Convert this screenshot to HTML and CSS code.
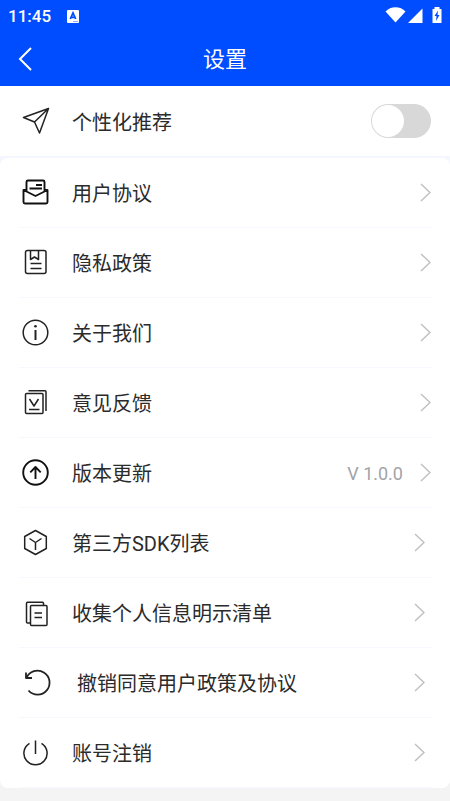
FILE: index.html
```html
<!DOCTYPE html>
<html lang="zh-CN">
<head>
<meta charset="utf-8">
<meta name="viewport" content="width=device-width, initial-scale=1">
<title>设置</title>
<link rel="stylesheet" href="styles.css">
</head>
<body>
<header class="header">
  <div class="status">
    <span class="clock">11:45</span>
    <svg class="status-app" viewBox="0 0 12 13" aria-hidden="true"><rect width="12" height="13" rx="1" fill="#fff"/><path d="M3.300 9 6 3l2.700 6M4 7.300h4" fill="none" stroke="#004dff" stroke-width="1.800"/><path d="M6 11.500h5" stroke="#8fb0ff"/></svg>
    <svg class="status-icons" viewBox="-1.500 0 58 18" aria-hidden="true">
      <path d="M0 4.500C5-1.200 15-1.200 20 4.500L10 15.500Z" fill="#fff"/>
      <path d="M37 1.500V16H22.500Z" fill="#fff"/>
      <path d="M47 2h2V0h5v2h2v14h-9Z" fill="#fff"/>
      <path d="M52.500 3.500 49 9h2l-.5 5L54 8h-2Z" fill="#004dff"/>
    </svg>
  </div>
  <nav class="nav">
    <button class="back" type="button" aria-label="返回"><svg viewBox="0 0 14 24"><path d="M13 1 2 12l11 11"/></svg></button>
    <h1 class="title">设置</h1>
  </nav>
</header>
<main>
  <section class="panel">
    <div class="row">
      <svg class="icon" viewBox="0 0 33 33" aria-hidden="true"><path d="M28.500 3.500 3.500 12.500l11 4.500 5 11ZM14.500 17l14-13.500"/></svg>
      <label class="label" for="recommend">个性化推荐</label>
      <input class="switch" id="recommend" type="checkbox" role="switch">
    </div>
  </section>
  <section class="card">
    <a class="row" href="#agreement">
      <svg class="icon bold" viewBox="0 0 33 33" aria-hidden="true"><path d="M6.500 15V6q0-1.500 1.500-1.500h15q1.500 0 1.500 1.500v9M6.500 12.500l-3 1.500v12q0 1.500 1.500 1.500h21q1.500 0 1.500-1.500V14l-3-1.500M3.500 14l12 6 12-6M16 9h6M9.500 12.500H22"/></svg>
      <span class="label">用户协议</span>
      <svg class="chevron" viewBox="0 0 11 19" aria-hidden="true"><path d="m1 1 9 8.500-9 8.500"/></svg>
    </a>
    <a class="row" href="#privacy">
      <svg class="icon" viewBox="0 0 33 33" aria-hidden="true"><rect x="5.500" y="4.500" width="20.500" height="23" rx="2"/><path d="M10.500 4.500v9l4-2.500 4 2.500v-9M10.500 17.500h11M10.500 22.500h11"/></svg>
      <span class="label">隐私政策</span>
      <svg class="chevron" viewBox="0 0 11 19" aria-hidden="true"><path d="m1 1 9 8.500-9 8.500"/></svg>
    </a>
    <a class="row" href="#about">
      <svg class="icon" viewBox="0 0 33 33" aria-hidden="true"><circle cx="15.500" cy="16.500" r="12.300"/><path d="M15.500 14v10" stroke-width="2"/><circle cx="15.500" cy="10.300" r="1.300" fill="#222" stroke="none"/></svg>
      <span class="label">关于我们</span>
      <svg class="chevron" viewBox="0 0 11 19" aria-hidden="true"><path d="m1 1 9 8.500-9 8.500"/></svg>
    </a>
    <a class="row" href="#feedback">
      <svg class="icon" viewBox="0 0 33 33" aria-hidden="true"><rect x="5.500" y="7.500" width="17.500" height="20" rx="1"/><path d="M8.500 4.700H25q1 0 1 1V25M9.500 13l4.500 7 4.500-7M9 23.500h10.500"/></svg>
      <span class="label">意见反馈</span>
      <svg class="chevron" viewBox="0 0 11 19" aria-hidden="true"><path d="m1 1 9 8.500-9 8.500"/></svg>
    </a>
    <a class="row" href="#update">
      <svg class="icon bold" viewBox="0 0 33 33" aria-hidden="true"><circle cx="15.500" cy="16.500" r="12.300"/><path d="M15.500 23V11M10.300 16.300l5.200-5.300 5.200 5.300"/></svg>
      <span class="label">版本更新</span>
      <span class="version">V 1.0.0</span>
      <svg class="chevron" viewBox="0 0 11 19" aria-hidden="true"><path d="m1 1 9 8.500-9 8.500"/></svg>
    </a>
    <a class="row inset" href="#sdk">
      <svg class="icon" viewBox="0 0 33 33" aria-hidden="true"><path d="M15.500 4.500 26.300 10.500v12L15.500 28.500l-10.800-6v-12ZM9.500 12.500l6 4 6-4M15.500 16.500V24"/></svg>
      <span class="label">第三方SDK列表</span>
      <svg class="chevron" viewBox="0 0 11 19" aria-hidden="true"><path d="m1 1 9 8.500-9 8.500"/></svg>
    </a>
    <a class="row inset" href="#collection">
      <svg class="icon" viewBox="0 0 33 33" aria-hidden="true"><path d="M23.500 9.500V7.300q0-1-1-1h-15q-1 0-1 1V26q0 1 1 1h3"/><rect x="10.500" y="9.500" width="16.500" height="20" rx="1"/><path d="M14.500 17H22M14.500 21.500H22"/></svg>
      <span class="label">收集个人信息明示清单</span>
      <svg class="chevron" viewBox="0 0 11 19" aria-hidden="true"><path d="m1 1 9 8.500-9 8.500"/></svg>
    </a>
    <a class="row inset" href="#revoke">
      <svg class="icon" viewBox="0 0 33 33" aria-hidden="true"><path d="M8.500 24.500A12 12 0 1 0 6.500 12M6 6.500V12h6" stroke-width="1.800"/></svg>
      <span class="label">&nbsp;撤销同意用户政策及协议</span>
      <svg class="chevron" viewBox="0 0 11 19" aria-hidden="true"><path d="m1 1 9 8.500-9 8.500"/></svg>
    </a>
    <a class="row inset" href="#close-account">
      <svg class="icon" viewBox="0 0 33 33" aria-hidden="true"><path d="M9.500 7.300a11.600 11.600 0 1 0 12 0M15.500 4.500V18"/></svg>
      <span class="label">账号注销</span>
      <svg class="chevron" viewBox="0 0 11 19" aria-hidden="true"><path d="m1 1 9 8.500-9 8.500"/></svg>
    </a>
  </section>
</main>
</body>
</html>
```
FILE: styles.css
```css
* {
  box-sizing: border-box;
}

body {
  margin: 0;
  background: #f4f4f4;
  color: #2b2b2b;
  font-family: Roboto, "Noto Sans CJK SC", sans-serif;
  font-size: 20px;
}

svg {
  display: block;
  flex: none;
}

.header {
  background: #004dff;
  color: #fff;
}

.status {
  display: flex;
  align-items: center;
  height: 32px;
  padding: 0 8px;
}

.clock {
  font-size: 17px;
  font-weight: 500;
  line-height: 32px;
}

.status-app {
  width: 12px;
  height: 13px;
  margin-left: 16px;
}

.status-icons {
  width: 58px;
  height: 18px;
  margin-left: auto;
}

.nav {
  display: grid;
  grid-template-columns: 52px 1fr 52px;
  align-items: center;
  height: 54px;
}

.back {
  display: flex;
  padding: 8px 18px;
  border: 0;
  background: none;
}

.back svg {
  width: 14px;
  height: 24px;
  fill: none;
  stroke: #fff;
  stroke-width: 2;
}

.title {
  margin: 0;
  padding-top: 2px;
  font-size: 22px;
  font-weight: 400;
  line-height: 32px;
  text-align: center;
}

.panel,
.card {
  padding: 0 19px;
  background: #fff;
}

.panel {
  margin-bottom: 2px;
}

main {
  background: linear-gradient(#f5f7ff 100px, #f4f4f4 100px);
}

.card {
  border-radius: 8px;
}

.row {
  display: flex;
  align-items: center;
  height: 70px;
  border-bottom: 1px solid #f7f8fe;
  color: inherit;
  text-decoration: none;
}

.panel .row {
  border-bottom: 0;
}

.icon {
  width: 33px;
  height: 33px;
  margin: 0 19px 0 1px;
  fill: none;
  stroke: #222;
  stroke-width: 1.5;
  stroke-linejoin: round;
}

.bold {
  stroke: #111;
  stroke-width: 1.9;
}

.label {
  flex: 1;
  padding-top: 4px;
  line-height: 29px;
  white-space: nowrap;
}

.version {
  margin-right: 17px;
  padding-top: 2px;
  color: #a3a3a8;
  font-size: 18px;
  line-height: 29px;
}

.chevron {
  width: 11px;
  height: 19px;
  fill: none;
  stroke: #c0c0c0;
  stroke-width: 1.5;
}

.inset .chevron {
  margin-right: 6px;
}

.switch {
  appearance: none;
  display: flex;
  width: 60px;
  height: 34px;
  margin: 0;
  padding: 1px;
  border-radius: 17px;
  background: #d8d8d8;
}

.switch::before {
  content: "";
  width: 32px;
  height: 32px;
  border-radius: 50%;
  background: #fff;
}

.switch:checked {
  justify-content: flex-end;
  background: #004dff;
}
```
